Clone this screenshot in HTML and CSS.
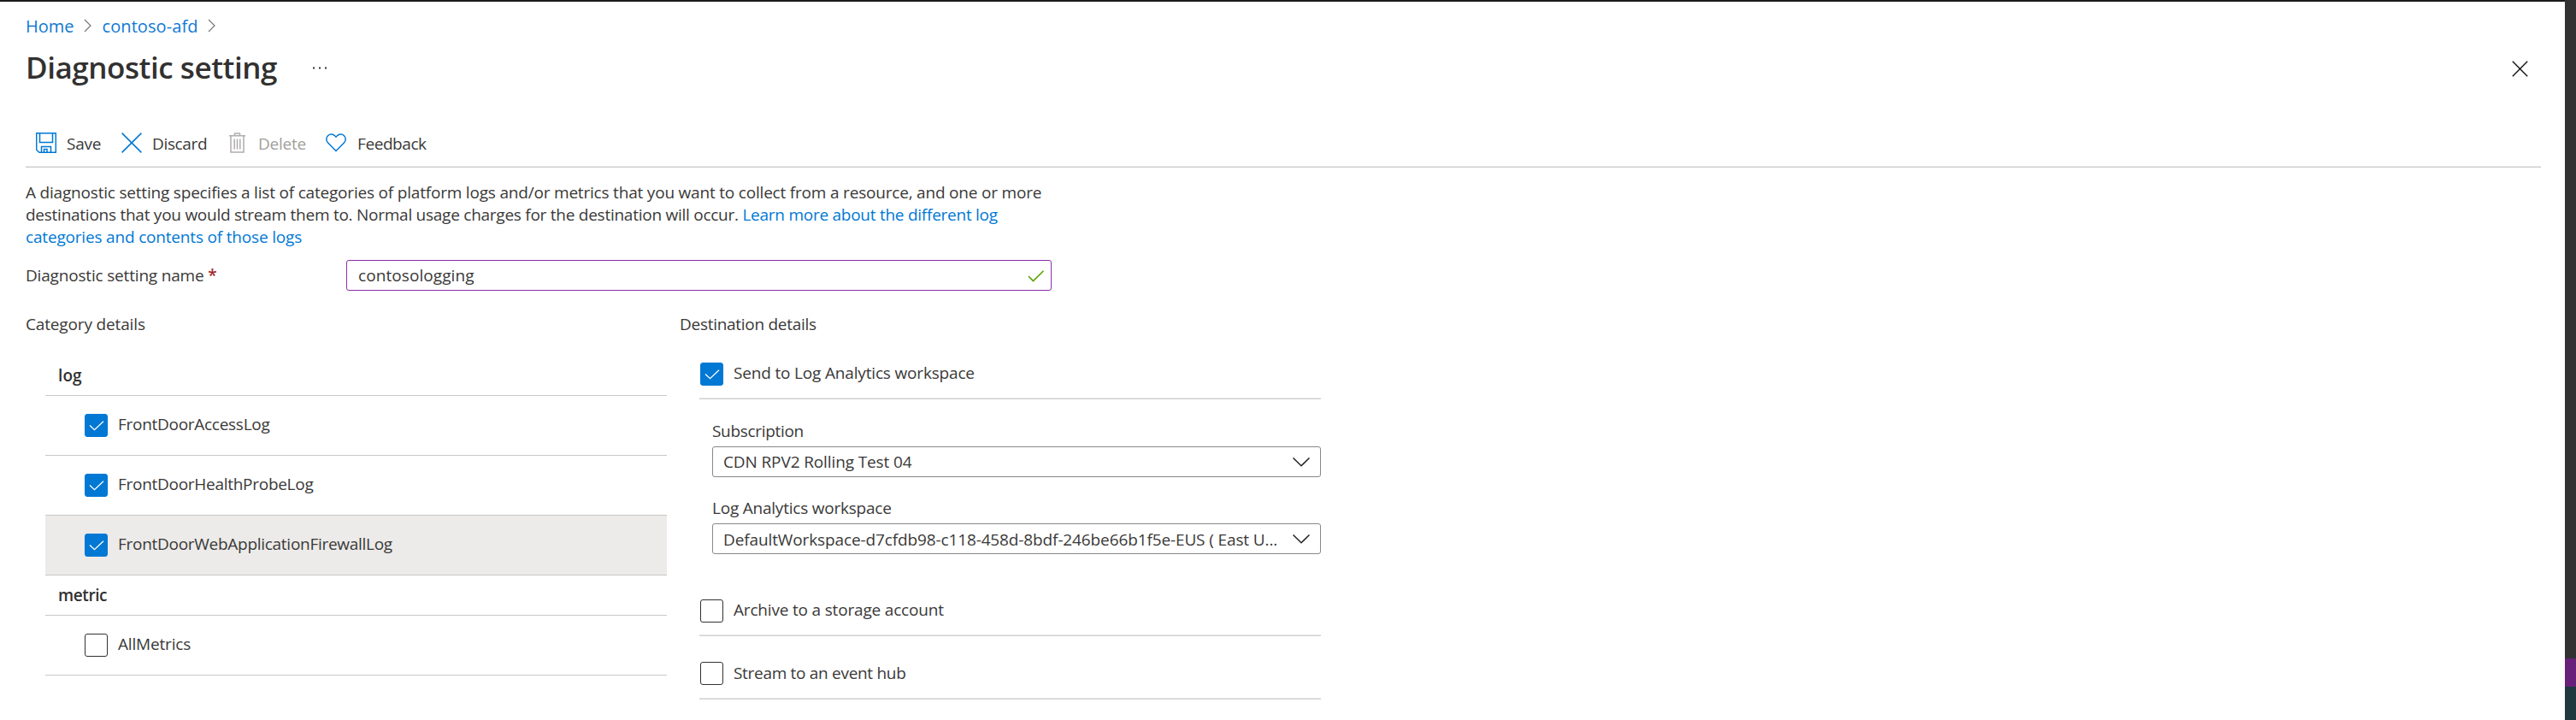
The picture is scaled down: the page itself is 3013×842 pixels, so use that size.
FILE: index.html
```html
<!DOCTYPE html>
<html lang="en">
<head>
<meta charset="utf-8">
<title>Diagnostic setting</title>
<link rel="stylesheet" href="styles.css">
</head>
<body>
<div class="shell">
  <main class="blade">
    <nav class="crumbs">
      <a class="crumb">Home</a>
      <svg class="crumb-sep" width="10" height="16" viewBox="0 0 10 16"><path d="M1 1l7 7-7 7"/></svg>
      <a class="crumb crumb-resource">contoso-afd</a>
      <svg class="crumb-sep" width="10" height="16" viewBox="0 0 10 16"><path d="M1 1l7 7-7 7"/></svg>
    </nav>

    <header class="title-row">
      <h1 class="title">Diagnostic setting</h1>
      <svg class="more" width="17" height="3" viewBox="0 0 17 3"><path d="M0 .5h2v2H0zM7 .5h2v2H7zM14 .5h2v2h-2z"/></svg>
      <svg class="close" width="19" height="19" viewBox="0 0 19 19"><path d="M.8.8l17.4 17.4M18.2.8L.8 18.2"/></svg>
    </header>

    <div class="toolbar">
      <button class="tool tool-save">
        <svg width="24" height="24" viewBox="0 0 24 24"><path d="M.7.7h22.600v22.600H4L.7 20.200zM4.500 1v10.500h15V1M6.500 23v-6.500h11V23M9.500 23v-3.500h3.500V23"/></svg>
        <span>Save</span>
      </button>
      <button class="tool tool-discard">
        <svg width="24" height="24" viewBox="0 0 24 24"><path d="M.6.6l22.800 22.800M23.400.6L.6 23.400"/></svg>
        <span>Discard</span>
      </button>
      <button class="tool tool-delete">
        <svg width="19" height="24" viewBox="0 0 19 24"><path d="M0 3.700h19M6.500 3.500V.9h6v2.600M2 4v19.100h15V4M6.200 7.500v12M9.500 7.500v12M12.800 7.500v12"/></svg>
        <span>Delete</span>
      </button>
      <button class="tool tool-feedback">
        <svg width="24" height="22" viewBox="0 0 24 22"><path d="M12 20.500L2.600 11C.2 8.500.3 4.800 2.500 2.700 4.900.4 8.500.5 10.700 2.800L12 4.100l1.300-1.300c2.200-2.300 5.800-2.400 8.200-.1 2.200 2.100 2.300 5.800-.1 8.300z"/></svg>
        <span>Feedback</span>
      </button>
    </div>

    <p class="intro"><span class="intro-first">A diagnostic setting specifies a list of categories of platform logs and/or metrics that you want to collect from a resource, and one or more</span><br>destinations that you would stream them to. Normal usage charges for the destination will occur. <a class="link">Learn more about the different log<br><span class="link-tail">categories and contents of those logs</span></a></p>

    <div class="name-row">
      <label class="name-label">Diagnostic setting name <span class="required">*</span></label>
      <div class="name-input">
        <span>contosologging</span>
        <svg width="20" height="14" viewBox="0 0 20 14"><path d="M1 7l5.500 5.500L18.500.7"/></svg>
      </div>
    </div>

    <div class="columns">
      <section class="categories">
        <h2 class="heading heading-category">Category details</h2>
        <div class="table">
          <div class="group group-log">log</div>
          <div class="row"><span class="box box-on"><svg width="18" height="12" viewBox="0 0 18 12"><path d="M1 5.500l5.500 5.200L17 .8"/></svg></span><span>FrontDoorAccessLog</span></div>
          <div class="row"><span class="box box-on"><svg width="18" height="12" viewBox="0 0 18 12"><path d="M1 5.500l5.500 5.200L17 .8"/></svg></span><span>FrontDoorHealthProbeLog</span></div>
          <div class="row row-hover"><span class="box box-on"><svg width="18" height="12" viewBox="0 0 18 12"><path d="M1 5.500l5.500 5.200L17 .8"/></svg></span><span>FrontDoorWebApplicationFirewallLog</span></div>
          <div class="group group-metric">metric</div>
          <div class="row row-metric"><span class="box"></span><span>AllMetrics</span></div>
        </div>
      </section>

      <section class="destinations">
        <h2 class="heading heading-destination">Destination details</h2>
        <div class="dest-list">
          <div class="dest dest-workspace"><span class="box box-on"><svg width="18" height="12" viewBox="0 0 18 12"><path d="M1 5.500l5.500 5.200L17 .8"/></svg></span><span>Send to Log Analytics workspace</span></div>
          <div class="fields">
            <label class="field-label label-subscription">Subscription</label>
            <div class="select select-subscription"><span>CDN RPV2 Rolling Test 04</span><svg width="20" height="11" viewBox="0 0 20 11"><path d="M.5.5L10 9.800 19.500.5"/></svg></div>
            <label class="field-label label-workspace">Log Analytics workspace</label>
            <div class="select select-workspace"><span>DefaultWorkspace-d7cfdb98-c118-458d-8bdf-246be66b1f5e-EUS ( East U...</span><svg width="20" height="11" viewBox="0 0 20 11"><path d="M.5.5L10 9.800 19.500.5"/></svg></div>
          </div>
          <div class="dest dest-storage"><span class="box"></span><span>Archive to a storage account</span></div>
          <div class="dest dest-hub"><span class="box"></span><span>Stream to an event hub</span></div>
        </div>
      </section>
    </div>
  </main>
  <aside class="edge">
    <div class="edge-purple"></div>
    <div class="edge-teal"></div>
  </aside>
</div>
</body>
</html>
```
FILE: styles.css
```css
* { box-sizing: border-box; }

body {
  margin: 0;
  background: #fff;
  color: #3a3938;
  font: 19px/26px "Open Sans", "Noto Sans", sans-serif;
  overflow: hidden;
}

svg { display: block; flex: none; fill: none; }

.shell { display: flex; height: 842px; }

.blade {
  flex: 1;
  min-width: 0;
  border-top: 2px solid #1b1a19;
  padding: 16px 28px 0 30px;
}

.edge {
  display: flex;
  flex-direction: column;
  justify-content: flex-end;
  width: 13px;
  background: #323232;
}
.edge-purple { height: 33px; background: #68217a; }
.edge-teal { height: 39px; background: #20383f; }

/* Breadcrumb */
.crumbs { display: flex; height: 26px; font-size: 20px; white-space: nowrap; }
.crumb { color: #0f78d4; }
.crumb-sep { margin: 4px 12px 0 11px; stroke: #797775; stroke-width: 1.2; }
.crumb-resource { letter-spacing: .08px; }

/* Title */
.title-row { display: flex; height: 48px; margin-top: 10px; }
.title { margin: 0; padding-top: 1px; color: #323130; font-size: 35px; line-height: 48px; font-weight: 600; letter-spacing: -.45px; white-space: nowrap; }
.more { margin: 24px 0 0 42px; fill: #323130; }
.close { margin: 17px 15px 0 auto; stroke: #111; stroke-width: 1.4; }

/* Command bar */
.toolbar {
  display: flex;
  height: 94px;
  padding: 40px 0 0 12px;
  border-bottom: 1px solid #ccc;
  box-shadow: inset 0 -1px #e8e8e8;
}
.tool {
  display: flex;
  align-items: center;
  gap: 12px;
  height: 50px;
  margin: 0;
  padding: 0;
  border: 0;
  background: none;
  color: inherit;
  font: inherit;
  white-space: nowrap;
}
.tool svg { stroke: #0078d4; stroke-width: 1.5; }
.tool span { padding-top: 1px; }
.tool-save { width: 100px; letter-spacing: -.2px; }
.tool-discard { width: 126px; letter-spacing: -.35px; }
.tool-delete { width: 113px; gap: 15px; color: #a19f9d; letter-spacing: -.25px; }
.tool-delete svg { stroke: #b0aeac; }
.tool-feedback { gap: 13px; letter-spacing: -.42px; }

/* Description */
.intro { margin: 16px 0 0; height: 78px; letter-spacing: -.255px; white-space: nowrap; }
.intro-first { letter-spacing: -.195px; }
.link { color: #0078d4; }
.link-tail { letter-spacing: -.18px; }

/* Name field */
.name-row { display: flex; align-items: center; height: 36px; margin-top: 14px; }
.name-label { width: 375px; letter-spacing: -.18px; }
.required { color: #a4262c; font-weight: 600; }
.name-input {
  display: flex;
  justify-content: space-between;
  align-items: center;
  width: 825px;
  height: 36px;
  padding: 0 7px 1px 13px;
  border: 1px solid #8a2da5;
  border-radius: 3px;
  letter-spacing: .08px;
}
.name-input svg { stroke: #57a300; stroke-width: 1.6; margin-top: 2px; }

/* Two columns */
.columns { display: flex; margin-top: 26px; white-space: nowrap; }
.categories { width: 765px; }
.heading { margin: 0; font-size: 19px; line-height: 26px; font-weight: 400; }
.heading-category { letter-spacing: -.15px; }
.heading-destination { letter-spacing: -.28px; }

.table { width: 727px; margin: 34px 0 0 23px; }
.group { padding-left: 15px; color: #323130; font-weight: 600; border-bottom: 1px solid #c8c8c8; }
.group-log { height: 37px; letter-spacing: .1px; }
.group-metric { height: 47px; padding-top: 10px; letter-spacing: -.4px; }
.row {
  display: flex;
  gap: 12px;
  height: 70px;
  padding: 20px 0 0 46px;
  border-bottom: 1px solid #c8c8c8;
  letter-spacing: -.28px;
}
.row-hover { background: #ecebe9; }
.row-metric { letter-spacing: -.18px; }

.box {
  display: flex;
  align-items: center;
  justify-content: center;
  flex: none;
  width: 27px;
  height: 27px;
  margin-top: 1px;
  border: 1px solid #323130;
  border-radius: 3px;
}
.box-on { background: #0078d4; border-color: #0078d4; }
.box svg { stroke: #fff; stroke-width: 1.3; }

/* Destinations */
.dest-list { width: 727px; margin: 31px 0 0 23px; }
.dest {
  display: flex;
  gap: 12px;
  padding-left: 1px;
  border-bottom: 1px solid #d0d0d0;
  box-shadow: inset 0 -1px #e8e8e8;
}
.dest-workspace { height: 44px; letter-spacing: -.17px; }
.dest-storage { height: 44px; margin-top: 52px; letter-spacing: -.18px; }
.dest-hub { height: 74px; padding-top: 30px; letter-spacing: -.3px; }
.dest-hub .box { margin-top: 0; }
.fields { display: flex; flex-direction: column; padding: 24px 0 0 15px; }
.field-label { height: 26px; }
.label-subscription { letter-spacing: -.32px; }
.label-workspace { margin-top: 23px; margin-bottom: 5px; letter-spacing: -.22px; }
.select {
  display: flex;
  align-items: center;
  justify-content: space-between;
  height: 36px;
  padding: 0 12px;
  border: 1px solid #8a8886;
  border-radius: 3px;
}
.select svg { stroke: #222; stroke-width: 1.5; }
.select-subscription { margin-top: 5px; letter-spacing: -.12px; }
.select-workspace { letter-spacing: -.12px; }
.select-workspace span { padding-top: 1px; }
```
